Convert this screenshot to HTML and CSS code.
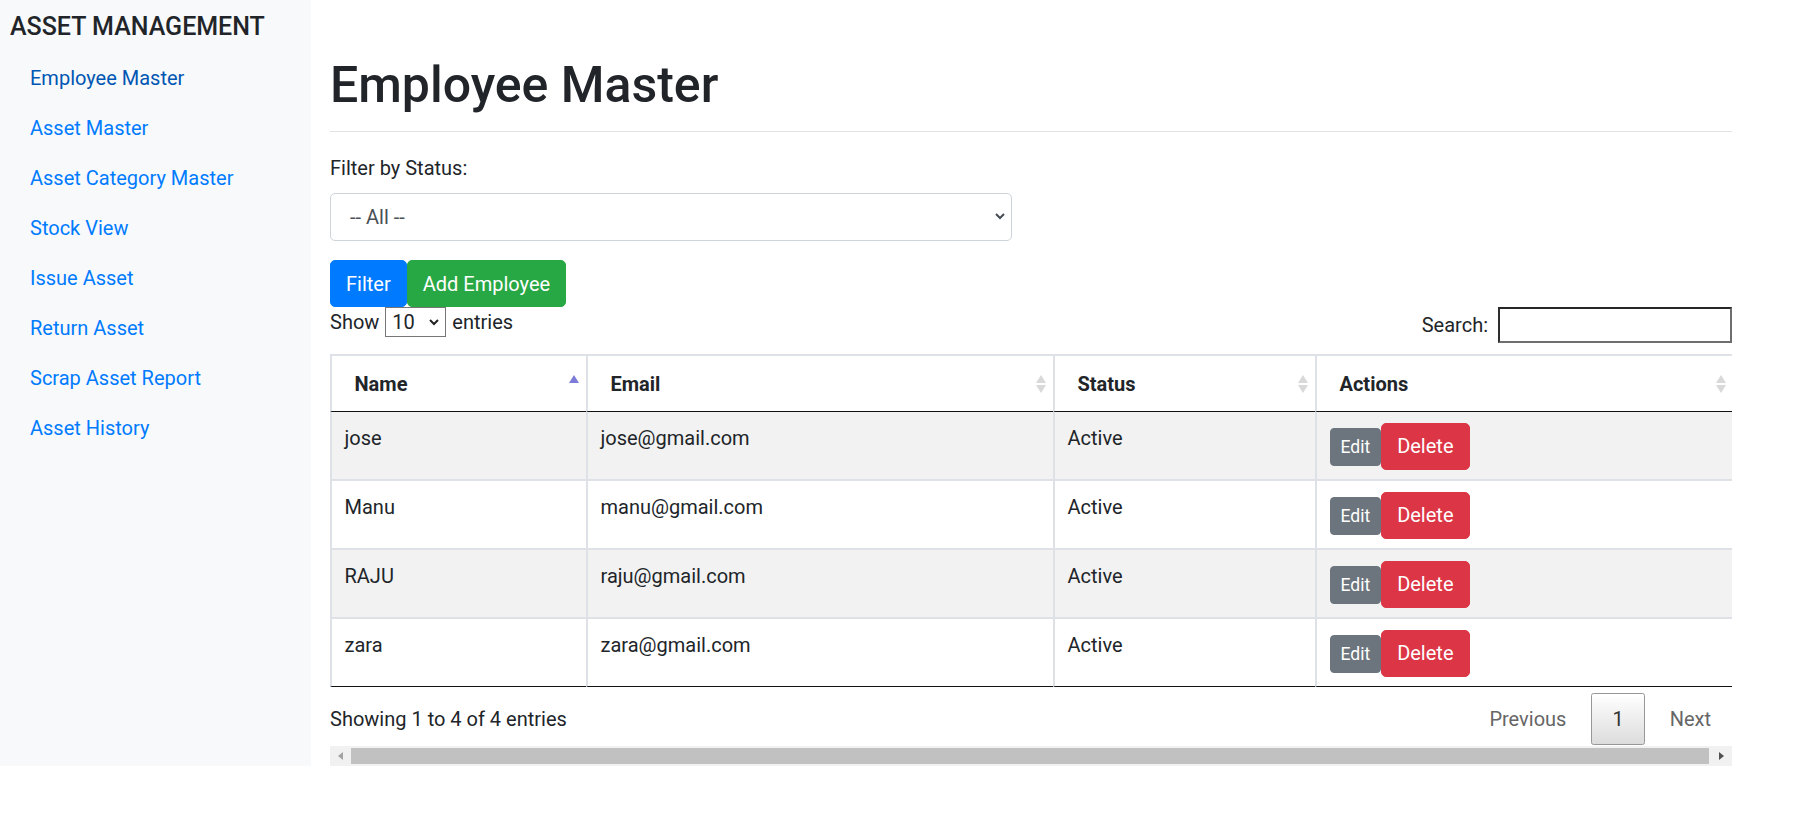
FILE: index.html
```html
<!DOCTYPE html>
<html lang="en">
<head>
<meta charset="utf-8">
<title>Employee Master</title>
<link rel="stylesheet" href="styles.css">
</head>
<body>
<div class="layout">
  <aside class="sidebar">
    <h5 class="brand">ASSET MANAGEMENT</h5>
    <nav class="nav">
      <a class="nav-link active" href="#">Employee Master</a>
      <a class="nav-link" href="#">Asset Master</a>
      <a class="nav-link" href="#">Asset Category Master</a>
      <a class="nav-link" href="#">Stock View</a>
      <a class="nav-link" href="#">Issue Asset</a>
      <a class="nav-link" href="#">Return Asset</a>
      <a class="nav-link" href="#">Scrap Asset Report</a>
      <a class="nav-link" href="#">Asset History</a>
    </nav>
  </aside>
  <main class="main">
    <h1 class="page-title">Employee Master</h1>
    <hr class="rule">
    <div class="form-group">
      <label class="form-label" for="status">Filter by Status:</label>
      <div class="select-wrap">
        <select id="status" class="form-control"><option>-- All --</option><option>Active</option><option>Inactive</option></select>
        <svg class="chev chev-lg" width="10" height="7" viewBox="0 0 10 7"><path d="M1 1 L5 5 L9 1" fill="none" stroke="#454c54" stroke-width="2"/></svg>
      </div>
    </div>
    <div class="btn-row">
      <button class="btn btn-primary" type="button">Filter</button><button class="btn btn-success" type="button">Add Employee</button>
    </div>
    <div class="dt">
      <div class="dt-top">
        <div class="dt-length">
          <span>Show</span>
          <span class="mini-wrap">
            <select class="mini-select"><option>10</option><option>25</option><option>50</option><option>100</option></select>
            <svg class="chev chev-sm" width="10" height="7" viewBox="0 0 10 7"><path d="M1 1 L5 5 L9 1" fill="none" stroke="#222" stroke-width="2"/></svg>
          </span>
          <span>entries</span>
        </div>
        <div class="dt-filter">
          <label for="search">Search:</label>
          <input id="search" class="search-input" type="search">
        </div>
      </div>
      <div class="dt-scroll">
        <table class="dt-table">
          <thead>
            <tr>
              <th class="c-name sort-asc">Name</th>
              <th class="c-email sort-both">Email</th>
              <th class="c-status sort-both">Status</th>
              <th class="c-actions sort-both">Actions</th>
            </tr>
          </thead>
          <tbody>
            <tr>
              <td>jose</td><td>jose@gmail.com</td><td>Active</td>
              <td><div class="actions"><button class="btn btn-sm btn-secondary" type="button">Edit</button><button class="btn btn-danger" type="button">Delete</button></div></td>
            </tr>
            <tr>
              <td>Manu</td><td>manu@gmail.com</td><td>Active</td>
              <td><div class="actions"><button class="btn btn-sm btn-secondary" type="button">Edit</button><button class="btn btn-danger" type="button">Delete</button></div></td>
            </tr>
            <tr>
              <td>RAJU</td><td>raju@gmail.com</td><td>Active</td>
              <td><div class="actions"><button class="btn btn-sm btn-secondary" type="button">Edit</button><button class="btn btn-danger" type="button">Delete</button></div></td>
            </tr>
            <tr>
              <td>zara</td><td>zara@gmail.com</td><td>Active</td>
              <td><div class="actions"><button class="btn btn-sm btn-secondary" type="button">Edit</button><button class="btn btn-danger" type="button">Delete</button></div></td>
            </tr>
          </tbody>
        </table>
      </div>
      <div class="dt-bottom">
        <div class="dt-info">Showing 1 to 4 of 4 entries</div>
        <div class="dt-paginate">
          <span class="page-btn disabled">Previous</span>
          <span class="page-btn current">1</span>
          <span class="page-btn disabled">Next</span>
        </div>
      </div>
      <div class="hscroll">
        <span class="hs-btn"><span class="tri-left"></span></span>
        <span class="hs-thumb"></span>
        <span class="hs-btn"><span class="tri-right"></span></span>
      </div>
    </div>
  </main>
</div>
</body>
</html>
```

FILE: styles.css
```css
* { box-sizing: border-box; }
html, body { margin: 0; padding: 0; }
body {
  font-family: Roboto, "Noto Sans", "Liberation Sans", sans-serif;
  font-size: 20px;
  line-height: 1.5;
  color: #212529;
  background: #fff;
}

.layout { display: flex; align-items: stretch; }

/* Sidebar */
.sidebar {
  flex: 0 0 311px;
  background: #f8f9fa;
  padding: 12px 10px 0 10px;
}
.brand {
  margin: 0 0 11px;
  font-size: 25px;
  font-weight: 500;
  line-height: 1.2;
  color: #212529;
}
.nav { display: flex; flex-direction: column; }
.nav-link {
  display: block;
  padding: 10px 20px;
  line-height: 30px;
  color: #007bff;
  text-decoration: none;
}
.nav-link.active { color: #0056b3; }

/* Main */
.main {
  flex: 1;
  min-width: 0;
  padding: 55px 71px 0 19px;
}
.page-title {
  margin: 0 0 15.5px;
  font-size: 50px;
  font-weight: 500;
  line-height: 1.2;
}
.rule {
  margin: 0 0 21.5px;
  height: 0;
  border: 0;
  border-top: 1px solid #e2e2e2;
}
.form-group { margin-bottom: 19.5px; }
.form-label { display: block; margin-bottom: 10px; line-height: 30px; }
.select-wrap { position: relative; width: 682px; }
.form-control {
  display: block;
  width: 100%;
  height: 47.5px;
  padding: 7.5px 15px 7.5px 19px;
  font: inherit;
  line-height: 30px;
  color: #495057;
  background: #fff;
  border: 1px solid #ced4da;
  border-radius: 5px;
  -webkit-appearance: none;
  appearance: none;
}
.chev { position: absolute; pointer-events: none; }
.chev-lg { right: 7px; top: 20px; }

.btn-row { display: flex; }
.btn {
  display: inline-block;
  margin: 0;
  font-family: inherit;
  font-size: 20px;
  line-height: 30px;
  padding: 7.5px 15px;
  border: 1px solid transparent;
  border-radius: 5px;
  color: #fff;
  cursor: pointer;
}
.btn-primary { background: #007bff; border-color: #007bff; }
.btn-success { background: #28a745; border-color: #28a745; }
.btn-secondary { background: #6c757d; border-color: #6c757d; }
.btn-danger { background: #dc3545; border-color: #dc3545; }
.btn-sm {
  font-size: 17.5px;
  line-height: 26.25px;
  padding: 5px 10px;
  border-radius: 4px;
}

/* DataTable */
.dt-top {
  display: flex;
  justify-content: space-between;
  align-items: flex-start;
  height: 46.5px;
}
.dt-length {
  display: flex;
  align-items: center;
  height: 30px;
  gap: 6px;
}
.mini-wrap { position: relative; display: inline-block; height: 30px; }
.mini-select {
  display: block;
  width: 61px;
  height: 30px;
  padding: 0 0 0 6px;
  font-family: inherit;
  font-size: 20px;
  color: #212529;
  background: #fff;
  border: 1px solid #767676;
  border-radius: 0;
  -webkit-appearance: none;
  appearance: none;
}
.chev-sm { right: 7px; top: 12px; }
.dt-filter {
  display: flex;
  align-items: center;
  height: 35.5px;
  gap: 10px;
}
.search-input {
  width: 234px;
  height: 35.5px;
  margin: 0;
  padding: 1px 3px;
  font-family: inherit;
  font-size: 17px;
  background: #fff;
  border-width: 2px;
  border-style: solid;
  border-color: #262626 #6e6e6e #6e6e6e #2e2e2e;
  border-radius: 0;
  -webkit-appearance: none;
  appearance: none;
}

.dt-scroll { overflow: hidden; }
.dt-table {
  width: 1406px;
  table-layout: fixed;
  border-collapse: separate;
  border-spacing: 0;
}
.c-name { width: 256px; }
.c-email { width: 467px; }
.c-status { width: 262px; }
.c-actions { width: 421px; }
.dt-table th {
  position: relative;
  text-align: left;
  font-weight: 700;
  line-height: 30px;
  padding: 13.5px 37.5px 11.5px 22.5px;
  border-top: 2px solid #dee2e6;
  border-left: 2px solid #dee2e6;
  border-bottom: 1px solid #111;
}
.dt-table td {
  line-height: 30px;
  padding: 11px 12.5px 9px;
  vertical-align: top;
  border-left: 2px solid #dee2e6;
}
.dt-table tbody tr + tr td { border-top: 2px solid #dee2e6; }
.dt-table tbody tr:last-child td { border-bottom: 1px solid #111; }
.dt-table tbody tr:nth-child(odd) td { background: #f2f2f2; }

.sort-asc::after,
.sort-both::before,
.sort-both::after {
  content: "";
  position: absolute;
  width: 0;
  height: 0;
  border-left: 5px solid transparent;
  border-right: 5px solid transparent;
}
.sort-asc::after {
  right: 7px;
  top: 19.5px;
  border-bottom: 8px solid #7c7cd8;
}
.sort-both::before {
  right: 7px;
  top: 19.5px;
  border-bottom: 8px solid #d9d9d9;
}
.sort-both::after {
  right: 7px;
  top: 29.5px;
  border-top: 8px solid #d9d9d9;
}
.c-actions.sort-both::before,
.c-actions.sort-both::after { right: 10px; }

.actions { display: flex; align-items: baseline; }

.dt-bottom {
  display: flex;
  justify-content: space-between;
  align-items: flex-start;
  height: 59.5px;
}
.dt-info { padding-top: 17.5px; line-height: 30px; }
.dt-paginate { display: flex; gap: 4px; padding-top: 6.5px; }
.page-btn {
  display: inline-block;
  padding: 10px 20px;
  line-height: 30px;
  border: 1px solid transparent;
  border-radius: 2.5px;
  color: #666;
}
.page-btn.current {
  color: #333;
  border-color: #979797;
  background: linear-gradient(to bottom, #fff 0%, #dcdcdc 100%);
}

.hscroll {
  display: flex;
  align-items: center;
  height: 20px;
  background: #f1f1f1;
}
.hs-btn {
  flex: 0 0 21px;
  height: 20px;
  display: flex;
  align-items: center;
  justify-content: center;
}
.hs-thumb {
  flex: 1;
  height: 16px;
  margin-right: 2px;
  background: #c1c1c1;
}
.tri-left {
  width: 0; height: 0;
  border-top: 4.5px solid transparent;
  border-bottom: 4.5px solid transparent;
  border-right: 5px solid #a3a3a3;
}
.tri-right {
  width: 0; height: 0;
  border-top: 4.5px solid transparent;
  border-bottom: 4.5px solid transparent;
  border-left: 5px solid #505050;
}
```
